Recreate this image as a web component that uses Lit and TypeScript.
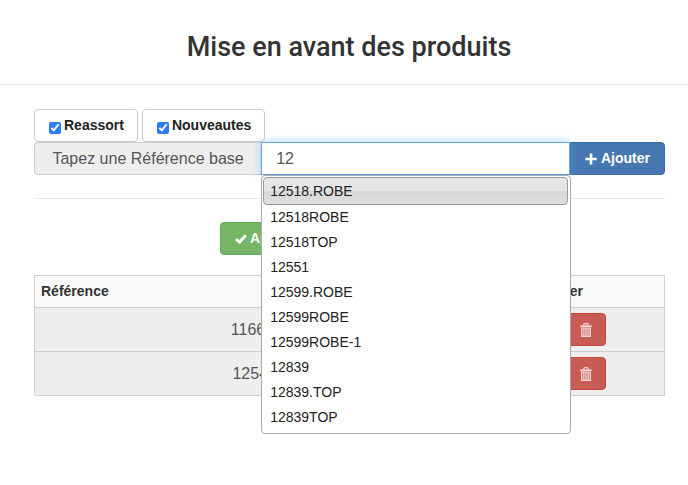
import { LitElement, html, css, svg } from "lit";
import { customElement, state } from "lit/decorators.js";

const plusIcon = svg`<svg class="icon" viewBox="0 0 12 12" aria-hidden="true"><path d="M4.7.4h2.6v4.3h4.3v2.6H7.3v4.3H4.7V7.3H.4V4.7h4.3z" fill="currentColor"/></svg>`;
const checkIcon = svg`<svg class="icon" viewBox="0 0 12 12" aria-hidden="true"><path d="M0 7 2.1 4.9 4.4 7.1 9.9 1.2 12 3.2 4.5 11.2z" fill="currentColor"/></svg>`;
const trashIcon = svg`<svg class="trash" viewBox="0 0 12 14" aria-hidden="true" fill="none" stroke="currentColor">
  <path d="M3.6 2.4Q3.8.7 5 .7h2q1.2 0 1.4 1.7" stroke-width="1.3"/>
  <path d="M.2 3.2h11.6" stroke-width="1.6"/>
  <path d="M1.6 5h8.8v8.4H1.6z" fill="currentColor" fill-opacity=".35" stroke-width="1.1"/>
  <path d="M3.6 5v8M5.2 5v8M6.8 5v8M8.4 5v8" stroke-width=".6"/>
</svg>`;

@customElement("app-root")
export class AppRoot extends LitElement {
  @state() private query = "12";
  @state() private products = ["11668.TOP", "12540TOP"];

  private suggestions = [
    "12518.ROBE",
    "12518ROBE",
    "12518TOP",
    "12551",
    "12599.ROBE",
    "12599ROBE",
    "12599ROBE-1",
    "12839",
    "12839.TOP",
    "12839TOP",
  ];

  static styles = css`
    :host {
      display: block;
      min-height: 100vh;
      background: #fff;
      color: #333;
      font: 14px/20px "Liberation Sans", Arial, sans-serif;
    }
    * {
      box-sizing: border-box;
    }
    header {
      padding: 30px 16px 20px 26px;
      border-bottom: 1px solid #e8e8e8;
    }
    h1 {
      margin: 0;
      font: 500 27px/34px Roboto, "Noto Sans", sans-serif;
      text-align: center;
    }
    main {
      padding: 24px 23px 24px 34px;
    }
    .toggles {
      display: flex;
      gap: 4px;
    }
    .toggle {
      display: flex;
      align-items: center;
      gap: 3px;
      height: 33px;
      padding: 0 13px 1px 14px;
      border: 1px solid #ccc;
      border-radius: 4px;
      font-weight: bold;
      color: #222;
    }
    .toggle input {
      width: 12px;
      height: 12px;
      margin: 6px 0 0;
      accent-color: #2f7cf6;
    }
    .search {
      display: flex;
      height: 33px;
    }
    .addon {
      flex: 0 0 36%;
      border: 1px solid #ccc;
      border-right: 0;
      border-radius: 4px 0 0 4px;
      background: #eee;
      color: #555;
      font-size: 16px;
      line-height: 31px;
      text-align: center;
      white-space: nowrap;
    }
    .field {
      position: relative;
      flex: 1;
      min-width: 0;
    }
    .field input {
      display: block;
      width: 100%;
      height: 33px;
      padding: 0 14px;
      border: 1px solid #66a3e0;
      border-radius: 0;
      outline: 0;
      background: #fff;
      box-shadow: 0 0 8px rgba(102, 175, 233, 0.6);
      color: #555;
      font: 16px/31px "Liberation Sans", Arial, sans-serif;
    }
    .menu {
      position: absolute;
      z-index: 2;
      top: 100%;
      left: 0;
      right: -1px;
      margin: 0;
      padding: 1px 2px 3px 1px;
      border: 1px solid #aaa;
      border-radius: 4px;
      background: #fff;
      list-style: none;
      color: #222;
    }
    .menu li {
      height: 25px;
      padding: 0 7px;
      line-height: 25px;
    }
    .menu .active {
      height: 28px;
      padding: 0 6px;
      border: 1px solid #999;
      border-radius: 4px;
      background: linear-gradient(#e6e6e6 50%, #d8d8d8 50%, #dfdfdf);
      line-height: 26px;
    }
    button {
      display: inline-flex;
      align-items: center;
      justify-content: center;
      gap: 4px;
      height: 33px;
      padding: 0 14px 1px;
      border: 1px solid;
      border-radius: 4px;
      color: #fff;
      font: bold 14px/20px "Liberation Sans", Arial, sans-serif;
    }
    .add {
      border-color: #3a6ca5;
      border-radius: 0 4px 4px 0;
      background: #4677b1;
    }
    .apply {
      justify-content: flex-start;
      min-width: 259px;
      gap: 3px;
      border-color: #62ad55;
      background: #74b566;
    }
    .delete {
      width: 41px;
      padding: 0;
      border-color: #c9453d;
      background: #c95c54;
    }
    .icon {
      width: 12px;
      height: 12px;
      margin-top: 2px;
    }
    .trash {
      width: 12px;
      height: 14px;
      color: #f6dad8;
    }
    hr {
      height: 1px;
      margin: 23px 0;
      border: 0;
      background: #e8e8e8;
    }
    .actions {
      display: flex;
      justify-content: center;
      margin-bottom: 20px;
    }
    table {
      width: 100%;
      border: 1px solid #d0d0d0;
      border-collapse: collapse;
      table-layout: fixed;
    }
    th {
      height: 32px;
      padding: 0 6px 1px;
      background: #f9f9f9;
      text-align: left;
    }
    .remove {
      width: 25%;
    }
    td {
      height: 44px;
      padding: 0;
      border-top: 1px solid #ccc;
      background: #eee;
      color: #555;
      font-size: 16px;
      text-align: center;
    }
    td button {
      vertical-align: middle;
    }
  `;

  private remove(ref: string) {
    this.products = this.products.filter((p) => p !== ref);
  }

  private add() {
    if (this.query && !this.products.includes(this.query)) {
      this.products = [...this.products, this.query];
    }
  }

  render() {
    return html`
      <header><h1>Mise en avant des produits</h1></header>
      <main>
        <div class="toggles">
          <label class="toggle"><input type="checkbox" checked />Reassort</label>
          <label class="toggle"><input type="checkbox" checked />Nouveautes</label>
        </div>
        <div class="search">
          <label class="addon" for="ref">Tapez une Référence base</label>
          <div class="field">
            <input
              id="ref"
              type="text"
              autocomplete="off"
              .value=${this.query}
              @input=${(e: Event) => (this.query = (e.target as HTMLInputElement).value)}
            />
            <ul class="menu" role="listbox">
              ${this.suggestions.map(
                (s, i) => html`<li
                  role="option"
                  aria-selected=${i === 0}
                  class=${i === 0 ? "active" : ""}
                  @click=${() => (this.query = s)}
                >${s}</li>`
              )}
            </ul>
          </div>
          <button class="add" type="button" @click=${this.add}>${plusIcon}Ajouter</button>
        </div>
        <hr />
        <div class="actions">
          <button class="apply" type="button">${checkIcon}Appliquer</button>
        </div>
        <table>
          <thead>
            <tr><th>Référence</th><th class="remove">Supprimer</th></tr>
          </thead>
          <tbody>
            ${this.products.map(
              (p) => html`<tr>
                <td>${p}</td>
                <td>
                  <button class="delete" type="button" aria-label="Supprimer ${p}" @click=${() => this.remove(p)}>${trashIcon}</button>
                </td>
              </tr>`
            )}
          </tbody>
        </table>
      </main>
    `;
  }
}
